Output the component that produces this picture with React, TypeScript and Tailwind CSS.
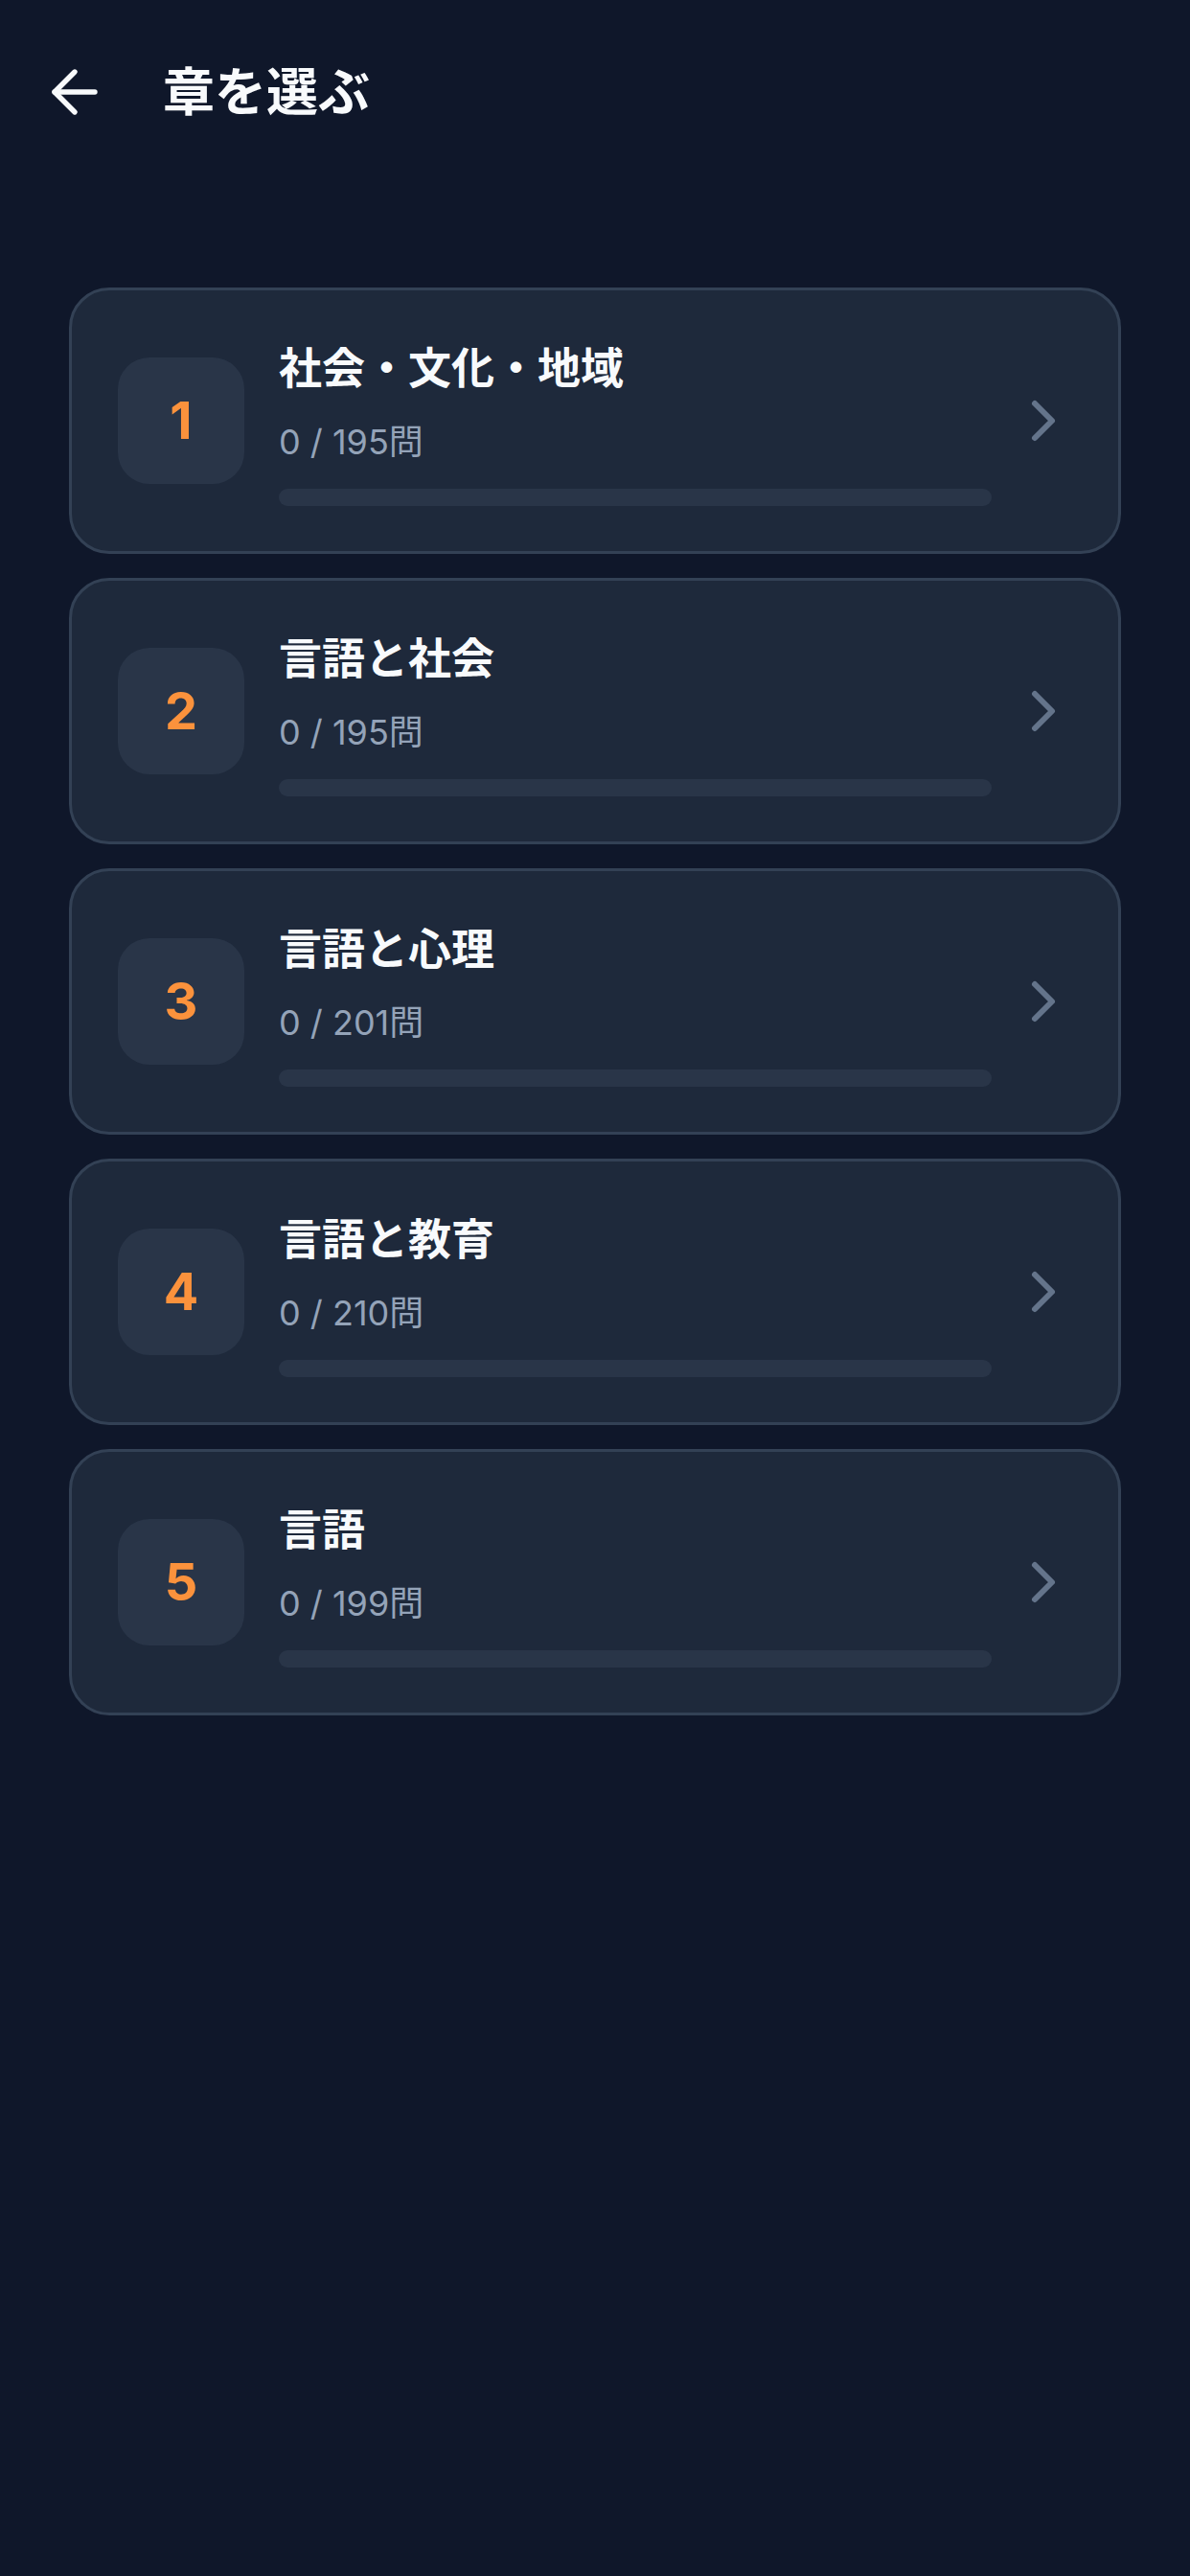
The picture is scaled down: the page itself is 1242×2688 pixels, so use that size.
import { ArrowLeft, ChevronRight } from "lucide-react";

type Chapter = {
    no: number,
    title: string,
    done: number,
    total: number
}

const chapters: Chapter[] = [
    {no: 1, title: "社会・文化・地域", done: 0, total: 195},
    {no: 2, title: "言語と社会", done: 0, total: 195},
    {no: 3, title: "言語と心理", done: 0, total: 201},
    {no: 4, title: "言語と教育", done: 0, total: 210},
    {no: 5, title: "言語", done: 0, total: 199},
];

const font = {fontFamily: 'Inter, "Noto Sans CJK JP", sans-serif'};

const ChapterCard = ({chapter}: { chapter: Chapter }) => (
    <button
        className="flex h-[278px] w-full items-center rounded-[42px] border-[3px] border-[#334155] bg-[#1e293b] pl-[48px] pr-[42px] text-left">
        <div className="flex h-[132px] w-[132px] shrink-0 items-center justify-center rounded-[33px] bg-[#293548]">
            <span className="text-[54px] font-bold leading-none text-[#fb923c]">{chapter.no}</span>
        </div>
        <div className="ml-[36px] flex min-w-0 flex-1 flex-col pt-[8px]">
            <h2 className="text-[45px] font-bold leading-[54px] text-[#f8fafc]">{chapter.title}</h2>
            <p className="mt-[27px] text-[36px] leading-[44px] text-[#94a3b8]">
                {chapter.done} / {chapter.total}問
            </p>
            <div className="mt-[27px] h-[18px] w-full overflow-hidden rounded-full bg-[#293548]">
                <div className="h-full rounded-full bg-[#fb923c]"
                     style={{width: `${(chapter.done / chapter.total) * 100}%`}}/>
            </div>
        </div>
        <ChevronRight className="ml-[18px] shrink-0 text-[#64748b]" size={72} strokeWidth={2}/>
    </button>
);

export default function App() {
    return (
        <div className="min-h-[2688px] bg-[#0f172a]" style={font}>
            <header className="flex h-[192px] items-center pl-[42px]">
                <ArrowLeft className="shrink-0 text-[#f8fafc]" size={72} strokeWidth={1.8}/>
                <h1 className="ml-[56px] text-[54px] font-bold text-[#f8fafc]">章を選ぶ</h1>
            </header>
            <main className="mt-[108px] flex flex-col gap-[25px] px-[72px]">
                {chapters.map((c) => <ChapterCard key={c.no} chapter={c}/>)}
            </main>
        </div>
    );
}
